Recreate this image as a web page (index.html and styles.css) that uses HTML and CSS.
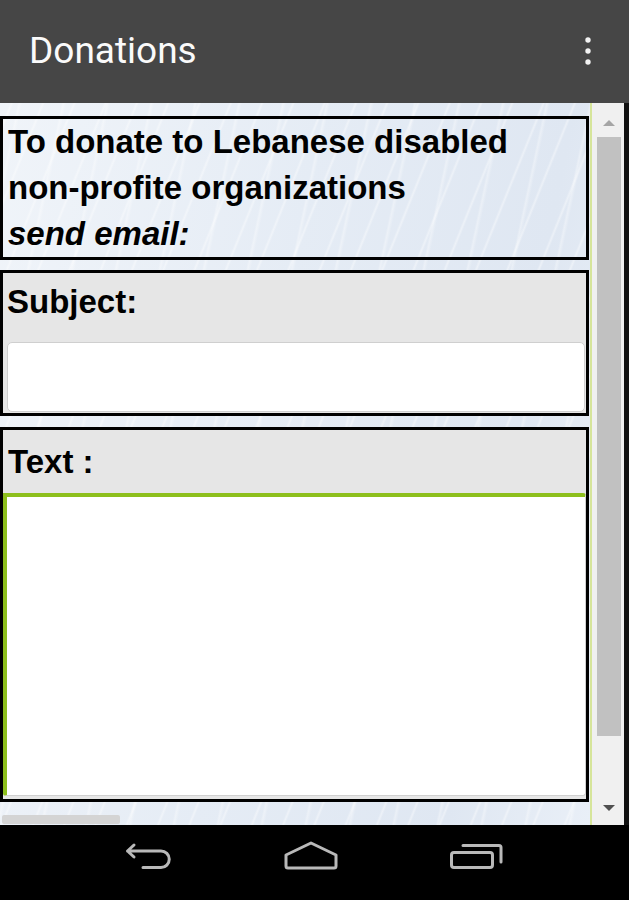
FILE: index.html
```html
<!DOCTYPE html>
<html lang="en">
<head>
  <meta charset="UTF-8">
  <meta name="viewport" content="width=device-width, initial-scale=1.0">
  <title>Donations</title>
  <link rel="stylesheet" href="styles.css">
</head>
<body>
  <header class="app-bar">
    <h1>Donations</h1>
    <svg class="menu" width="8" height="28" viewBox="0 0 8 28">
      <circle cx="4" cy="3" r="2.7" fill="#f2f2f2"/>
      <circle cx="4" cy="14" r="2.7" fill="#f2f2f2"/>
      <circle cx="4" cy="25" r="2.7" fill="#f2f2f2"/>
    </svg>
  </header>
  <div class="screen">
    <main class="page">
      <div class="panel intro">
        To donate to Lebanese disabled<br>
        non-profite organizations<br>
        <em>send email:</em>
      </div>
      <div class="panel field">
        <label for="subject">Subject:</label>
        <input type="text" id="subject" name="subject">
      </div>
      <div class="panel field message">
        <label for="text">Text :</label>
        <textarea id="text" name="text"></textarea>
      </div>
      <div class="hscroll"><span class="hthumb"></span></div>
    </main>
    <div class="vscroll">
      <div class="arrow-box"><span class="arrow up"></span></div>
      <div class="track"><span class="thumb"></span></div>
      <div class="arrow-box"><span class="arrow down"></span></div>
    </div>
  </div>
  <nav class="nav-bar">
    <svg width="50" height="30" viewBox="0 0 50 30">
      <path d="M10 5 L3.5 11 L10 17 M3.5 11 H37 A8.2 8.2 0 0 1 37 27.5 H19" fill="none" stroke="#b9b9b9" stroke-width="3" stroke-linecap="round" stroke-linejoin="round"/>
    </svg>
    <svg width="56" height="30" viewBox="0 0 56 30">
      <path d="M28 3 L3 15 V26 Q3 28 5 28 H51 Q53 28 53 26 V15 Z" fill="none" stroke="#b9b9b9" stroke-width="3" stroke-linejoin="round"/>
    </svg>
    <svg width="56" height="30" viewBox="0 0 56 30">
      <path d="M15 5.5 H51 Q53 5.5 53 7.5 V22" fill="none" stroke="#b9b9b9" stroke-width="3" stroke-linecap="round"/>
      <rect x="3.5" y="12.5" width="41" height="15" rx="2.5" fill="none" stroke="#b9b9b9" stroke-width="3"/>
    </svg>
  </nav>
</body>
</html>
```

FILE: styles.css
```css
body {
  margin: 0;
  width: 629px;
  height: 900px;
  display: flex;
  flex-direction: column;
  overflow: hidden;
  font-family: "Liberation Sans", Arial, sans-serif;
  background-color: #000;
}
.app-bar {
  height: 103px;
  flex-shrink: 0;
  display: flex;
  align-items: center;
  justify-content: space-between;
  padding: 0 37px 0 29px;
  background-color: #464646;
}
.app-bar h1 {
  margin: 0 0 2px;
  font-family: Roboto, "Liberation Sans", sans-serif;
  font-weight: 400;
  font-size: 37px;
  line-height: 1;
  color: #fafafa;
}
.app-bar .menu {
  margin-top: -2px;
}
.screen {
  flex: 1;
  display: flex;
  border-right: 5px solid #111;
  min-height: 0;
}
.page {
  width: 590px;
  padding-top: 13px;
  box-sizing: border-box;
  background:
    repeating-linear-gradient(112deg, rgba(255, 255, 255, 0) 0 9px, rgba(255, 255, 255, 0.4) 11px, rgba(255, 255, 255, 0) 13px 29px),
    repeating-linear-gradient(102deg, rgba(255, 255, 255, 0) 0 17px, rgba(255, 255, 255, 0.35) 19px, rgba(255, 255, 255, 0) 22px 43px),
    linear-gradient(100deg, #f0f4f9 0%, #e5ecf5 45%, #dfe7f2 80%, #e9eff7 100%);
}
.panel {
  margin-right: 1px;
  border: 3px solid #000;
  color: #000;
  font-weight: bold;
  font-size: 33px;
  line-height: 46px;
}
.intro {
  height: 138px;
  padding-left: 5px;
  margin-bottom: 10px;
}
.intro em {
  font-style: italic;
}
.field {
  background-color: #e6e6e6;
  height: 140px;
  margin-bottom: 11px;
}
.field label {
  display: block;
  padding: 6px 4px 17px;
}
.field input[type="text"] {
  display: block;
  width: 578px;
  height: 70px;
  margin: 0 1px 0 4px;
  box-sizing: border-box;
  border: 1px solid #cfcfcf;
  border-radius: 5px;
  background-color: #fff;
}
.message {
  height: 369px;
  margin-bottom: 0;
}
.message label {
  padding: 9px 5px 8px;
}
.message textarea {
  display: block;
  width: 583px;
  height: 303px;
  margin: 0;
  box-sizing: border-box;
  border-style: solid;
  border-width: 4px 1px 1px 4px;
  border-color: #8dbf1c #d0d0d0 #d0d0d0 #8dbf1c;
  border-radius: 0 3px 3px 3px;
  background-color: #fff;
  resize: none;
}
.hscroll {
  height: 23px;
}
.hthumb {
  display: block;
  width: 118px;
  height: 9px;
  margin: 13px 0 0 2px;
  border-radius: 2px;
  background-color: #d4d4d4;
}
.vscroll {
  width: 32px;
  border-left: 2px solid #d6e59a;
  display: flex;
  flex-direction: column;
  background-color: #f0f0f0;
}
.arrow-box {
  height: 34px;
  display: flex;
  align-items: center;
  justify-content: center;
  padding-left: 1px;
}
.arrow {
  width: 0;
  height: 0;
  border-left: 6px solid transparent;
  border-right: 6px solid transparent;
}
.arrow.up {
  border-bottom: 6px solid #a5a5a5;
  margin-top: 5px;
}
.arrow.down {
  border-top: 6px solid #505050;
}
.track {
  flex: 1;
}
.thumb {
  display: block;
  height: 599px;
  margin: 0 3px 0 5px;
  background-color: #c1c1c1;
}
.nav-bar {
  height: 75px;
  flex-shrink: 0;
  display: flex;
  align-items: flex-start;
  gap: 109px;
  padding: 15px 0 0 124px;
  box-sizing: border-box;
  background-color: #000;
}
```
